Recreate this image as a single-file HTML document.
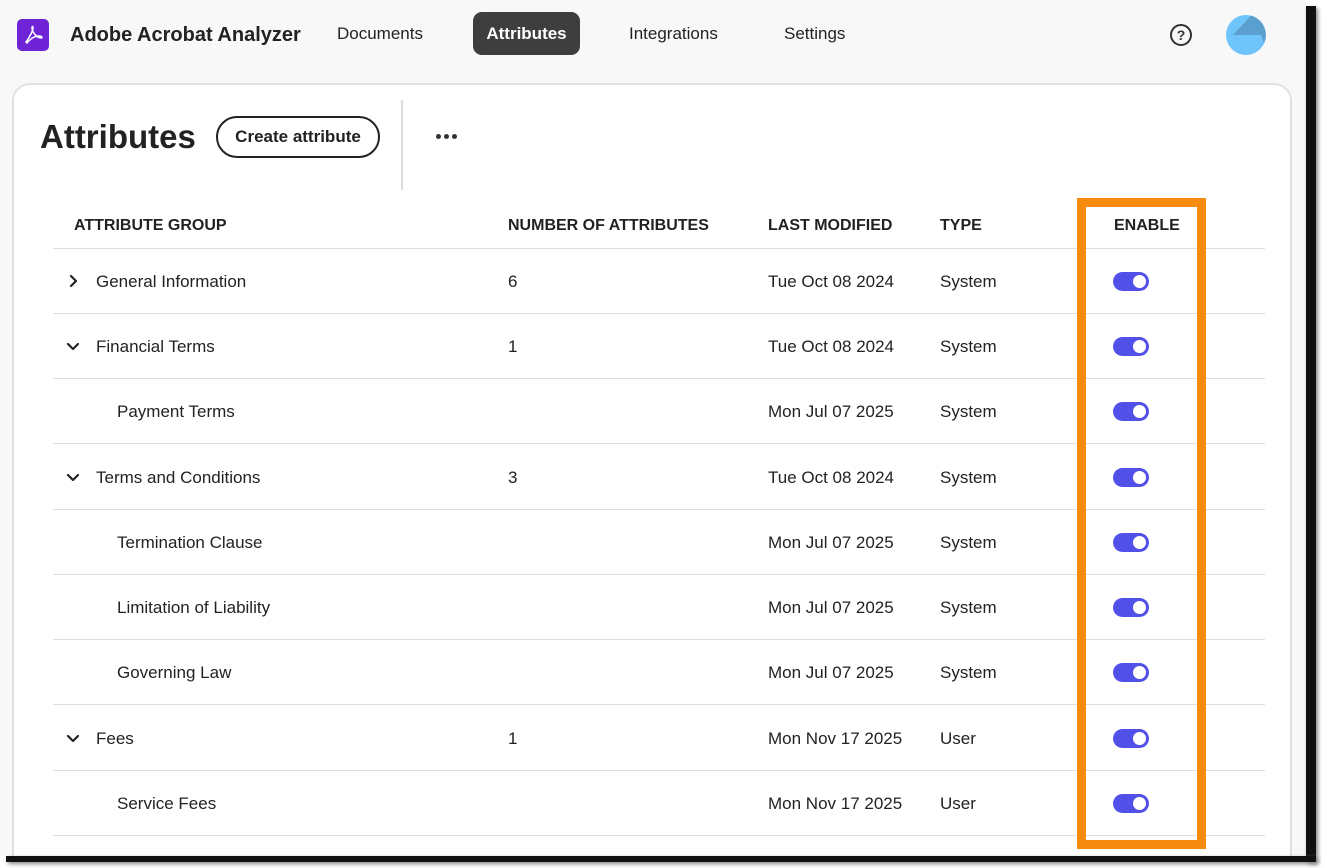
<!DOCTYPE html>
<html><head><style>
*{box-sizing:border-box;margin:0;padding:0}
body{width:1322px;height:868px;background:#fff;font-family:"Liberation Sans",sans-serif;color:#222;position:relative;overflow:hidden}
.page{position:absolute;left:0;top:0;width:1306px;height:856px;background:#f8f8f8;overflow:hidden}
.shadowR{position:absolute;left:1306px;top:6px;width:10px;height:856px;background:#111;box-shadow:2px 2px 4px #888}
.shadowB{position:absolute;left:6px;top:856px;width:1310px;height:6px;background:#111;box-shadow:2px 2px 4px #888}
.logo{position:absolute;left:17px;top:19px;width:32px;height:32px;background:#6e23d6;border-radius:5px}
.brand{position:absolute;left:70px;top:24px;font-size:20px;font-weight:bold;color:#222}
.nav{position:absolute;top:24px;font-size:17px;color:#222}
.navsel{position:absolute;left:473px;top:12px;width:107px;height:43px;background:#3e3e3e;border-radius:9px;color:#fff;font-size:17px;font-weight:bold;text-align:center;line-height:43px}
.card{position:absolute;left:12px;top:83px;width:1280px;height:820px;background:#fff;border:2px solid #e1e1e1;border-radius:18px}
h1{position:absolute;left:40px;top:118px;font-size:33px;font-weight:bold;color:#222}
.btn{position:absolute;left:216px;top:116px;width:164px;height:42px;border:2px solid #222;border-radius:21px;font-size:17px;font-weight:bold;text-align:center;line-height:38px}
.vsep{position:absolute;left:401px;top:100px;width:2px;height:90px;background:#ddd}
.dot{position:absolute;top:134px;width:5px;height:5px;border-radius:50%;background:#333}
.th{position:absolute;top:217px;font-size:16px;font-weight:bold;color:#222}
.line{position:absolute;left:53px;width:1212px;height:1px;background:#ddd}
.cell{position:absolute;font-size:17px;color:#222}
.chev{position:absolute;left:66px}
.tog{position:absolute;left:1113px;width:36px;height:19px;background:#5151ea;border-radius:10px}
.tog::after{content:"";position:absolute;right:3px;top:3px;width:13px;height:13px;background:#fff;border-radius:50%}
.orange{position:absolute;left:1077px;top:198px;width:129px;height:651px;border:9px solid #f68c0f}
</style></head><body>
<div class="page">
<div class="logo"><svg width="32" height="32" viewBox="0 0 32 32"><path d="M9 23 C12 19 16 12 16 9 C16 7 15 7 15 9 C15 13 20 19 24 19 C26 19 25 17 22 17 C17 17 12 21 10 24 Z" fill="none" stroke="#fff" stroke-width="1.5"/></svg></div>
<div class="brand">Adobe Acrobat Analyzer</div>
<div class="nav" style="left:337px">Documents</div>
<div class="navsel">Attributes</div>
<div class="nav" style="left:629px">Integrations</div>
<div class="nav" style="left:784px">Settings</div>
<svg style="position:absolute;left:1169px;top:23px" width="24" height="24" viewBox="0 0 24 24"><circle cx="12" cy="12" r="10" fill="none" stroke="#333" stroke-width="2"/><text x="12" y="17" font-size="14" font-weight="bold" text-anchor="middle" fill="#333" font-family="Liberation Sans">?</text></svg>
<svg style="position:absolute;left:1226px;top:15px" width="40" height="40" viewBox="0 0 40 40"><circle cx="20" cy="20" r="20" fill="#6fc4fb"/><path d="M25 0.6 A20 20 0 0 1 38 28 L35 20 L7 20 Z" fill="#5a9fcd"/></svg>
<div class="card"></div>
<h1>Attributes</h1>
<div class="btn">Create attribute</div>
<div class="vsep"></div>
<div class="dot" style="left:436px"></div><div class="dot" style="left:444px"></div><div class="dot" style="left:452px"></div>
<div class="th" style="left:74px">ATTRIBUTE GROUP</div>
<div class="th" style="left:508px">NUMBER OF ATTRIBUTES</div>
<div class="th" style="left:768px">LAST MODIFIED</div>
<div class="th" style="left:940px">TYPE</div>
<div class="th" style="left:1114px">ENABLE</div>
<div class="line" style="top:248px"></div>

<svg class="chev" style="top:274px" width="14" height="14" viewBox="0 0 14 14"><path d="M5 2 L10 7 L5 12" fill="none" stroke="#222" stroke-width="2.2" stroke-linecap="round" stroke-linejoin="round"/></svg>
<div class="cell" style="left:96px;top:272px">General Information</div><div class="cell" style="left:508px;top:272px">6</div><div class="cell" style="left:768px;top:272px">Tue Oct 08 2024</div><div class="cell" style="left:940px;top:272px">System</div><div class="tog" style="top:272px"></div><div class="line" style="top:313px"></div>

<svg class="chev" style="top:339px" width="14" height="14" viewBox="0 0 14 14"><path d="M2 5 L7 10 L12 5" fill="none" stroke="#222" stroke-width="2.2" stroke-linecap="round" stroke-linejoin="round"/></svg>
<div class="cell" style="left:96px;top:337px">Financial Terms</div><div class="cell" style="left:508px;top:337px">1</div><div class="cell" style="left:768px;top:337px">Tue Oct 08 2024</div><div class="cell" style="left:940px;top:337px">System</div><div class="tog" style="top:337px"></div><div class="line" style="top:378px"></div>

<div class="cell" style="left:117px;top:402px">Payment Terms</div><div class="cell" style="left:768px;top:402px">Mon Jul 07 2025</div><div class="cell" style="left:940px;top:402px">System</div><div class="tog" style="top:402px"></div><div class="line" style="top:443px"></div>

<svg class="chev" style="top:470px" width="14" height="14" viewBox="0 0 14 14"><path d="M2 5 L7 10 L12 5" fill="none" stroke="#222" stroke-width="2.2" stroke-linecap="round" stroke-linejoin="round"/></svg>
<div class="cell" style="left:96px;top:468px">Terms and Conditions</div><div class="cell" style="left:508px;top:468px">3</div><div class="cell" style="left:768px;top:468px">Tue Oct 08 2024</div><div class="cell" style="left:940px;top:468px">System</div><div class="tog" style="top:468px"></div><div class="line" style="top:509px"></div>

<div class="cell" style="left:117px;top:533px">Termination Clause</div><div class="cell" style="left:768px;top:533px">Mon Jul 07 2025</div><div class="cell" style="left:940px;top:533px">System</div><div class="tog" style="top:533px"></div><div class="line" style="top:574px"></div>

<div class="cell" style="left:117px;top:598px">Limitation of Liability</div><div class="cell" style="left:768px;top:598px">Mon Jul 07 2025</div><div class="cell" style="left:940px;top:598px">System</div><div class="tog" style="top:598px"></div><div class="line" style="top:639px"></div>

<div class="cell" style="left:117px;top:663px">Governing Law</div><div class="cell" style="left:768px;top:663px">Mon Jul 07 2025</div><div class="cell" style="left:940px;top:663px">System</div><div class="tog" style="top:663px"></div><div class="line" style="top:704px"></div>

<svg class="chev" style="top:731px" width="14" height="14" viewBox="0 0 14 14"><path d="M2 5 L7 10 L12 5" fill="none" stroke="#222" stroke-width="2.2" stroke-linecap="round" stroke-linejoin="round"/></svg>
<div class="cell" style="left:96px;top:729px">Fees</div><div class="cell" style="left:508px;top:729px">1</div><div class="cell" style="left:768px;top:729px">Mon Nov 17 2025</div><div class="cell" style="left:940px;top:729px">User</div><div class="tog" style="top:729px"></div><div class="line" style="top:770px"></div>

<div class="cell" style="left:117px;top:794px">Service Fees</div><div class="cell" style="left:768px;top:794px">Mon Nov 17 2025</div><div class="cell" style="left:940px;top:794px">User</div><div class="tog" style="top:794px"></div><div class="line" style="top:835px"></div>

<div class="orange"></div>
</div>
<div class="shadowR"></div>
<div class="shadowB"></div>
</body></html>
